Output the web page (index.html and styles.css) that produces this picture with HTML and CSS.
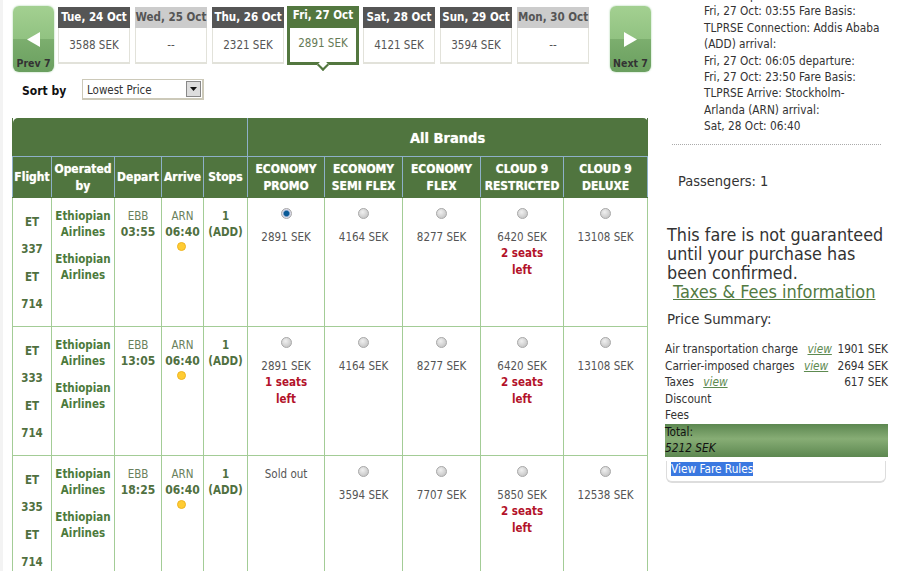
FILE: index.html
```html
<!DOCTYPE html>
<html lang="en">
<head>
<meta charset="utf-8">
<title>Select fare</title>
<link rel="stylesheet" href="styles.css">
</head>
<body>
<div class="page">
  <main class="left">
    <div class="dates">
      <a class="nav"><svg class="nav-ico" width="13" height="15" viewBox="0 0 13 15"><path d="M13 0v15L0 7.500z" fill="#fff"/></svg><span>Prev 7</span></a>
      <div class="tabs">
        <div class="tab"><div class="tab-h">Tue, 24 Oct</div><div class="tab-b">3588 SEK</div></div>
        <div class="tab off"><div class="tab-h">Wed, 25 Oct</div><div class="tab-b">--</div></div>
        <div class="tab"><div class="tab-h">Thu, 26 Oct</div><div class="tab-b">2321 SEK</div></div>
        <div class="tab on"><div class="tab-h">Fri, 27 Oct</div><div class="tab-b">2891 SEK</div></div>
        <div class="tab"><div class="tab-h">Sat, 28 Oct</div><div class="tab-b">4121 SEK</div></div>
        <div class="tab"><div class="tab-h">Sun, 29 Oct</div><div class="tab-b">3594 SEK</div></div>
        <div class="tab off"><div class="tab-h">Mon, 30 Oct</div><div class="tab-b">--</div></div>
      </div>
      <a class="nav"><svg class="nav-ico" width="13" height="15" viewBox="0 0 13 15"><path d="M0 0v15l13-7.500z" fill="#fff"/></svg><span>Next 7</span></a>
    </div>
    <div class="sort">
      <span class="sort-l">Sort by</span>
      <div class="select"><span>Lowest Price</span><i class="sel-btn"><svg width="7" height="4" viewBox="0 0 7 4"><path d="M0 0h7L3.500 4z" fill="#111"/></svg></i></div>
    </div>
    <table class="fares">
      <colgroup>
        <col class="c1"><col class="c2"><col class="c3"><col class="c4"><col class="c5">
        <col class="c6"><col class="c7"><col class="c8"><col class="c9"><col class="c10">
      </colgroup>
      <thead>
        <tr class="h1"><th colspan="5"></th><th colspan="5" class="brands">All Brands</th></tr>
        <tr class="h2">
          <th>Flight</th><th>Operated by</th><th>Depart</th><th>Arrive</th><th>Stops</th>
          <th>ECONOMY PROMO</th><th>ECONOMY SEMI FLEX</th><th>ECONOMY FLEX</th><th>CLOUD 9 RESTRICTED</th><th>CLOUD 9 DELUXE</th>
        </tr>
      </thead>
      <tbody>
        <tr>
          <td class="fl">ET<br>337<br>ET<br>714</td>
          <td class="op"><p>Ethiopian Airlines</p><p>Ethiopian Airlines</p></td>
          <td class="tm">EBB<b>03:55</b></td>
          <td class="tm">ARN<b>06:40</b><i class="dot"></i></td>
          <td class="st">1<br>(ADD)</td>
          <td><input type="radio" name="r1" class="rd" checked>2891 SEK</td>
          <td><input type="radio" name="r1" class="rd">4164 SEK</td>
          <td><input type="radio" name="r1" class="rd">8277 SEK</td>
          <td><input type="radio" name="r1" class="rd">6420 SEK<em>2 seats left</em></td>
          <td><input type="radio" name="r1" class="rd">13108 SEK</td>
        </tr>
        <tr>
          <td class="fl">ET<br>333<br>ET<br>714</td>
          <td class="op"><p>Ethiopian Airlines</p><p>Ethiopian Airlines</p></td>
          <td class="tm">EBB<b>13:05</b></td>
          <td class="tm">ARN<b>06:40</b><i class="dot"></i></td>
          <td class="st">1<br>(ADD)</td>
          <td><input type="radio" name="r1" class="rd">2891 SEK<em>1 seats left</em></td>
          <td><input type="radio" name="r1" class="rd">4164 SEK</td>
          <td><input type="radio" name="r1" class="rd">8277 SEK</td>
          <td><input type="radio" name="r1" class="rd">6420 SEK<em>2 seats left</em></td>
          <td><input type="radio" name="r1" class="rd">13108 SEK</td>
        </tr>
        <tr>
          <td class="fl">ET<br>335<br>ET<br>714</td>
          <td class="op"><p>Ethiopian Airlines</p><p>Ethiopian Airlines</p></td>
          <td class="tm">EBB<b>18:25</b></td>
          <td class="tm">ARN<b>06:40</b><i class="dot"></i></td>
          <td class="st">1<br>(ADD)</td>
          <td class="sold">Sold out</td>
          <td><input type="radio" name="r1" class="rd">3594 SEK</td>
          <td><input type="radio" name="r1" class="rd">7707 SEK</td>
          <td><input type="radio" name="r1" class="rd">5850 SEK<em>2 seats left</em></td>
          <td><input type="radio" name="r1" class="rd">12538 SEK</td>
        </tr>
      </tbody>
    </table>
  </main>
  <aside class="right">
    <div class="itin">(EBB) departure:<br>Fri, 27 Oct: 03:55 Fare Basis:<br>TLPRSE Connection: Addis Ababa<br>(ADD) arrival:<br>Fri, 27 Oct: 06:05 departure:<br>Fri, 27 Oct: 23:50 Fare Basis:<br>TLPRSE Arrive: Stockholm-<br>Arlanda (ARN) arrival:<br>Sat, 28 Oct: 06:40</div>
    <div class="pax">Passengers: 1</div>
    <div class="notice">This fare is not guaranteed until your purchase has been confirmed.<a class="taxes">Taxes &amp; Fees information</a></div>
    <div class="sum-t">Price Summary:</div>
    <div class="sum">
      <div class="line"><span>Air transportation charge <a class="view">view</a></span><span>1901 SEK</span></div>
      <div class="line"><span>Carrier-imposed charges <a class="view">view</a></span><span>2694 SEK</span></div>
      <div class="line"><span>Taxes <a class="view">view</a></span><span>617 SEK</span></div>
      <div class="line">Discount</div>
      <div class="line">Fees</div>
      <div class="total">Total:<br><i>5212 SEK</i></div>
      <div class="rules"><span class="sel">View Fare Rules</span></div>
    </div>
  </aside>
</div>
</body>
</html>
```
FILE: styles.css
```css
html, body { margin: 0; padding: 0; background: #fff; }
body { height: 571px; overflow: hidden; }
.page {
  display: flex;
  height: 571px;
  overflow: hidden;
  padding-left: 9px;
  border-left: 3px solid #f3f3f3;
  box-sizing: border-box;
  font: 12px/16.400px "DejaVu Sans Condensed", "DejaVu Sans", sans-serif;
  color: #444;
}
.left { width: 637px; flex: none; }

.dates { display: flex; align-items: flex-start; padding: 6px 0 0 1px; height: 67px; }
.nav {
  flex: none; width: 41px; height: 66px; box-sizing: border-box;
  border-radius: 6px;
  background: linear-gradient(#a3d091 0, #91c281 50%, #7cae6e 50%, #6a9f5f 100%);
  box-shadow: 0 0 2px #9c9;
  display: flex; flex-direction: column; align-items: center;
  font-size: 10.500px; line-height: 12px; font-weight: bold; color: #333;
}
.nav-ico { margin-top: 26px; margin-bottom: 10px; }
.tabs { display: flex; width: 556px; flex: none; padding: 1px 0 0 4px; box-sizing: border-box; gap: 5px; }
.tab { width: 72px; height: 57px; box-sizing: border-box; border: 1px solid #e2e2da; border-bottom-width: 2px; flex: none; }
.tab-h {
  height: 21px; margin: -1px -1px 0; background: #555; color: #fff;
  font-weight: bold; font-size: 11.500px; line-height: 20px; text-align: center; white-space: nowrap;
}
.tab-b { text-align: center; line-height: 35px; font-size: 11.500px; color: #555; }
.tab.off .tab-h { background: #ccc; color: #555; }
.tab.on { width: 72px; height: 59px; margin: -1px -1px 0 -2px; border: 3px solid #53773f; position: relative; }
.tab.on .tab-h { margin: -3px -3px 0; height: 22px; background: #53773f; line-height: 19px; }
.tab.on .tab-b { line-height: 31px; color: #667a55; }
.tab.on::after {
  content: ""; position: absolute; left: 27px; bottom: -9px; width: 9px; height: 9px;
  background: #fff; border: solid #53773f; border-width: 0 3px 3px 0; transform: rotate(45deg) scale(.72);
}

.sort { display: flex; align-items: center; height: 21px; margin-top: 6px; padding-left: 10px; }
.sort-l { width: 60px; color: #111; font-weight: bold; padding-top: 3px; }
.select {
  width: 122px; height: 21px; box-sizing: border-box; border: 1px solid #ccc9b9; border-width: 1px 2px 2px 1px;
  display: flex; align-items: center; justify-content: space-between; padding-left: 4px; color: #333; font-size: 11.500px;
}
.select span { padding-top: 2px; }
.sel-btn {
  width: 15px; height: 16px; margin-right: 1px; background: #ddd; border: 1px solid #888; box-sizing: border-box;
  display: flex; align-items: center; justify-content: center;
}

.fares { table-layout: fixed; width: 635px; border-collapse: collapse; margin-top: 18px; text-align: center; }
.c1 { width: 39px; } .c2 { width: 63px; } .c3 { width: 47px; } .c4 { width: 42px; } .c5 { width: 44px; }
.c6 { width: 77px; } .c7 { width: 78px; } .c8 { width: 78px; } .c9 { width: 83px; } .c10 { width: 84px; }
.fares th { background: #50753f; color: #fff; padding: 1px 0 0; font-weight: bold; border: 1px solid #8eb0c8; text-shadow: 0 0 1px #c8d8b0; }
.h1 th { height: 35px; border-top: 0; font-size: 14.500px; border-bottom-color: #8eb0c8; padding-top: 3px; }
.h1 th:first-child { border-left-color: #50753f; border-top-left-radius: 5px; }
.h1 th:last-child { border-right-color: #50753f; border-top-right-radius: 5px; }
.brands { border-left: 2px solid #b5c4ad; }
.h2 th { height: 39px; line-height: 16.400px; border-bottom-color: #50753f; }
.fares td { border: 1px solid #a3cc96; height: 117px; vertical-align: top; padding: 10px 3px 0; color: #555; font-size: 11.500px; }
.fares td.fl { padding: 11px 0 0; line-height: 27.400px; font-weight: bold; color: #50703f; }
.fares td.op { padding: 10px 0 0; color: #4c7a3c; font-weight: bold; }
.op p { margin: 0 0 10px; }
.fares td.tm { padding: 10px 0 0; color: #6a7f5c; }
.tm b { display: block; color: #50703f; font-size: 12px; }
.dot {
  display: block; width: 7px; height: 7px; margin: 1px auto 0; border-radius: 50%;
  background: #fc3; border: 1px solid #eeb422; box-sizing: content-box; transform: translateX(-1px);
}
.fares td.st { padding: 10px 0 0; color: #50703f; font-weight: bold; }
.rd {
  appearance: none; display: block; width: 11px; height: 11px; margin: 0 auto 10px; box-sizing: border-box; border-radius: 50%;
  background: radial-gradient(circle at 40% 35%, #f0f0f0, #bbb); border: 1px solid #aaa;
}
.rd:checked { background: radial-gradient(circle, #0a5a96 0 35%, #dde 60%, #bbb); }
.fares td em { display: block; font-style: normal; font-weight: bold; color: #b3122a; margin: 0 auto; width: 60px; }
.fares td.sold { padding-top: 10px; }

.right { width: 224px; flex: none; margin-left: 15px; color: #333; }
.itin { margin: -13px 7px 0 40px; font-size: 11.750px; white-space: nowrap; padding-bottom: 8px; }
.itin::after { content: ""; display: block; margin: 9px 0 0 -32px; width: 209px; border-top: 1px dotted #aaa; }
.pax { font-size: 14.500px; padding: 20px 0 0 14px; }
.notice { font-size: 17.800px; line-height: 19px; padding: 36px 0 0 3px; color: #333; }
.taxes { display: block; padding-left: 6px; color: #527a42; text-decoration: underline; font-size: 18px; }
.sum-t { font-size: 14.800px; padding: 10px 0 0 3px; }
.sum { padding: 14px 0 0 1px; font-size: 11.750px; }
.line { display: flex; justify-content: space-between; white-space: pre; }
.view { color: #5d8a50; font-style: italic; text-decoration: underline; margin-left: 6px; }
.total { height: 33px; background: linear-gradient(#5c8750, #87ad75 45%, #5c8750); color: #111; }
.rules { margin: 4px 2px 0 1px; height: 20px; border: 1px solid #ddd; border-width: 0 1px 2px; border-radius: 0 0 6px 6px; padding-left: 4px; }
.sel { background: #3a78e0; color: #fff; }
```
